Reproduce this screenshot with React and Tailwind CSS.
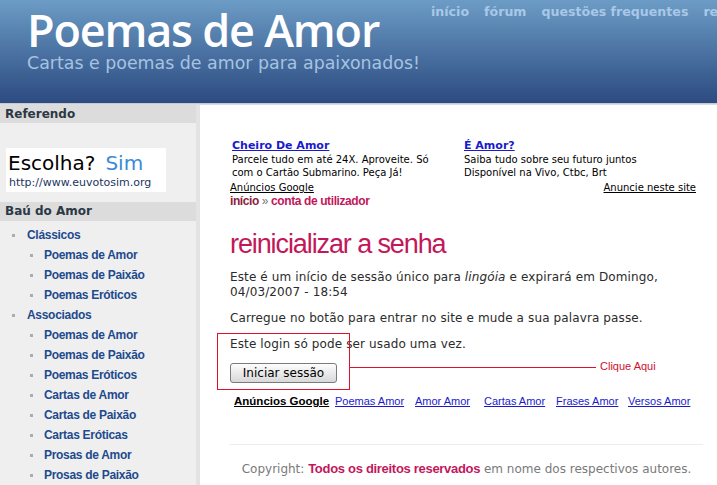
import React from 'react';

const verdana = "font-['DejaVu_Sans',Verdana,sans-serif]";
const arial = "font-['Liberation_Sans',Arial,sans-serif]";

const Bullet = () => <span className="inline-block w-[3px] h-[3px] bg-[#a5adb8] shrink-0" />;

const SideItem = ({ label, sub }) => (
    <li className={`h-[20px] flex items-center ${sub ? 'pl-[30px] gap-[11px]' : 'pl-[12px] gap-[12px]'}`}>
        <Bullet />
        <a className={`${arial} text-[12px] font-bold tracking-[-0.3px] text-[#1e4a8e]`}>{label}</a>
    </li>
);

const menu = [
    ['Clássicos', false],
    ['Poemas de Amor', true],
    ['Poemas de Paixão', true],
    ['Poemas Eróticos', true],
    ['Associados', false],
    ['Poemas de Amor', true],
    ['Poemas de Paixão', true],
    ['Poemas Eróticos', true],
    ['Cartas de Amor', true],
    ['Cartas de Paixão', true],
    ['Cartas Eróticas', true],
    ['Prosas de Amor', true],
    ['Prosas de Paixão', true],
];

const Ad = ({ title, lines }) => (
    <div className="w-[232px]">
        <a className={`${verdana} block text-[11px] leading-[14px] font-bold underline text-[#1a1acc]`}>{title}</a>
        {lines.map((l, i) => (
            <div key={i} className={`${verdana} text-[10px] leading-[13px] text-black`}>{l}</div>
        ))}
    </div>
);

export default function App() {
    return (
        <div className="relative w-[717px] h-[485px] overflow-hidden bg-white">
            {/* header */}
            <div className="h-[103px] flex bg-gradient-to-b from-[#6c9cc5] to-[#2d4b81]">
                <div className="w-[431px] shrink-0 pl-[27px] pt-[4px]">
                    <div className="font-['Open_Sans',sans-serif] font-semibold text-[45px] leading-[52px] tracking-[-1.2px] text-white">Poemas de Amor</div>
                    <div className={`${verdana} text-[17.4px] leading-[18px] text-[#a6c3e1] -mt-[2px]`}>Cartas e poemas de amor para apaixonados!</div>
                </div>
                <nav className={`${verdana} flex gap-[15px] whitespace-nowrap pt-[3px] text-[12.6px] font-bold text-[#a9c8e8]`}>
                    <a>início</a>
                    <a>fórum</a>
                    <a>questões frequentes</a>
                    <a>registar</a>
                </nav>
            </div>
            <div className="h-[2px] bg-gradient-to-b from-[#b9c0c9] to-[#e6e6e6]" />

            <div className="flex">
                {/* sidebar */}
                <aside className="w-[200px] shrink-0 h-[400px] bg-[#efefef] border-r-[4px] border-solid border-[color:#e3e3e3]">
                    <div className={`${verdana} h-[18px] bg-[#dcdcdc] pl-[5px] text-[12px] leading-[18px] font-bold text-[#2c3845]`}>Referendo</div>
                    <div className="pt-[25px] pl-[6px] pb-[10px]">
                        <div className="w-[160px] h-[44px] bg-white pl-[2px] pt-[2px]">
                            <div className={`${verdana} text-[20px] leading-[26px] text-black`}>Escolha?<span className="ml-[10px] text-[#3b8ad8]">Sim</span></div>
                            <div className={`${verdana} text-[11px] leading-[13px] text-[#1c355f] pl-[1px]`}>http://www.euvotosim.org</div>
                        </div>
                    </div>
                    <div className={`${verdana} h-[19px] bg-[#dcdcdc] pl-[5px] text-[12px] leading-[19px] font-bold text-[#2c3845]`}>Baú do Amor</div>
                    <ul className="pt-[4px]">
                        {menu.map(([l, s], i) => <SideItem key={i} label={l} sub={s} />)}
                    </ul>
                </aside>

                {/* content */}
                <main className="flex-1 pl-[30px] pr-[14px]">
                    <div className="pt-[34px] pl-[2px] flex">
                        <Ad title="Cheiro De Amor" lines={['Parcele tudo em até 24X. Aproveite. Só', 'com o Cartão Submarino. Peça Já!']} />
                        <Ad title="É Amor?" lines={['Saiba tudo sobre seu futuro juntos', 'Disponível na Vivo, Ctbc, Brt']} />
                    </div>
                    <div className={`${verdana} flex justify-between mt-[2px] pr-[7px] text-[10px] leading-[13px] text-black`}>
                        <a className="underline">Anúncios Google</a>
                        <a className="underline">Anuncie neste site</a>
                    </div>
                    <div className={`${arial} text-[12px] leading-[15px] font-bold tracking-[-0.4px]`}>
                        <a className="text-[#8e1c40]">início</a>
                        <span className="text-[#777] font-normal"> » </span>
                        <a className="text-[#c2185b]">conta de utilizador</a>
                    </div>
                    <h1 className="font-['Liberation_Sans',sans-serif] text-[27px] leading-[30px] tracking-[-1.1px] text-[#c2185b] mt-[20px]">reinicializar a senha</h1>
                    <div className={`${verdana} text-[12px] leading-[15px] tracking-[0.12px] text-[#2b2b2b]`}>
                        <p className="mt-[11px]">Este é um início de sessão único para <i>lingóia</i> e expirará em Domingo, 04/03/2007 - 18:54</p>
                        <p className="mt-[11px]">Carregue no botão para entrar no site e mude a sua palavra passe.</p>
                        <p className="mt-[11px]">Este login só pode ser usado uma vez.</p>
                    </div>
                    <button className={`${verdana} mt-[11px] w-[107px] h-[20px] text-[12px] leading-[18px] text-black rounded-[3px] border border-solid border-[color:#7a7a7a] bg-gradient-to-b from-[#fdfdfd] to-[#d8d8d8]`}>Iniciar sessão</button>
                    <div className="flex items-end mt-[10px] pl-[4px] h-[15px]">
                        <a className={`${arial} w-[101px] text-[11.5px] leading-[14px] font-bold underline text-black`}>Anúncios Google</a>
                        {[['Poemas Amor', 'w-[80px]'], ['Amor Amor', 'w-[69px]'], ['Cartas Amor', 'w-[72px]'], ['Frases Amor', 'w-[72px]'], ['Versos Amor', 'w-[70px]']].map(([l, w]) => (
                            <a key={l} className={`${arial} ${w} text-[11px] leading-[13px] underline text-[#1a1acc]`}>{l}</a>
                        ))}
                    </div>
                    <div className="mt-[36px] h-px bg-[#ececec]" />
                    <div className={`${verdana} mt-[16px] text-center text-[12px] leading-[15px] text-[#7a7a7a] whitespace-nowrap`}>
                        Copyright: <a className={`${arial} font-bold text-[13px] tracking-[-0.3px] text-[#c2185b]`}>Todos os direitos reservados</a> em nome dos respectivos autores.
                    </div>
                </main>
            </div>

            {/* annotation */}
            <div className="absolute left-[217px] top-[333px] w-[133px] h-[57px] border border-solid border-[color:#e0102a]" />
            <div className="absolute left-[350px] top-[367px] w-[246px] h-px bg-[#e0102a]" />
            <div className={`absolute left-[600px] top-[359px] ${arial} text-[11px] leading-[14px] text-[#d0102e]`}>Clique Aqui</div>
        </div>
    );
}
